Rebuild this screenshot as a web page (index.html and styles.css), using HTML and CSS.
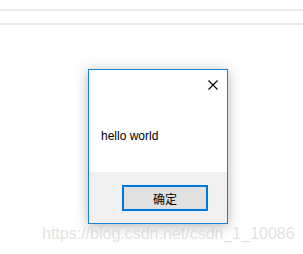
FILE: index.html
```html
<!DOCTYPE html>
<html lang="zh">
<head>
  <meta charset="UTF-8">
  <meta name="viewport" content="width=device-width, initial-scale=1.0">
  <title>alert</title>
  <link rel="stylesheet" href="styles.css">
</head>
<body>

  <!-- page behind the dialog -->
  <div class="page">
    <div class="rule rule-first"></div>
    <div class="rule"></div>
  </div>

  <!-- message box -->
  <div class="dialog">
    <div class="dialog-body">
      <button class="close-btn" aria-label="close">
        <svg width="10" height="10" viewBox="0 0 10 10">
          <path d="M0.5 0.5 L9.5 9.5 M9.5 0.5 L0.5 9.5" stroke="#000" stroke-width="1.1" fill="none"/>
        </svg>
      </button>
      <p class="message">hello world</p>
    </div>
    <div class="dialog-footer">
      <button class="ok-btn">确定</button>
    </div>
  </div>

  <!-- watermark -->
  <div class="watermark">https://blog.csdn.net/csdn_1_10086</div>

</body>
</html>
```

FILE: styles.css
```css
/* Base */
body {
  margin: 0;
  padding: 0;
  background-color: #ffffff;
  font-family: 'Liberation Sans', Arial, sans-serif;
  width: 303px;
  height: 254px;
  overflow: hidden;
  position: relative;
}

.page {
  padding-top: 9px;
}

.rule {
  height: 2px;
  background-color: #ebebeb;
}

.rule-first {
  margin-bottom: 12px;
}

/* Dialog */
.dialog {
  position: absolute;
  left: 88px;
  top: 69px;
  width: 140px;
  height: 155px;
  box-sizing: border-box;
  border: 1px solid #1883d7;
  background-color: #ffffff;
  box-shadow: 0 2px 12px rgba(0, 0, 0, 0.3);
  display: flex;
  flex-direction: column;
}

.dialog-body {
  height: 102px;
  position: relative;
  display: flex;
  align-items: center;
  padding-left: 12px;
}

.message {
  margin: 0;
  padding-top: 29px;
  font-size: 12px;
  color: #000000;
}

.close-btn {
  position: absolute;
  top: 10px;
  right: 9px;
  width: 10px;
  height: 10px;
  padding: 0;
  border: none;
  background: none;
  display: flex;
}

.dialog-footer {
  flex: 1;
  background-color: #f0f0f0;
  display: flex;
  justify-content: flex-end;
  align-items: flex-start;
  padding: 13px 19px 0 0;
}

.ok-btn {
  width: 86px;
  height: 26px;
  box-sizing: border-box;
  border: 2px solid #0078d7;
  background-color: #e1e1e1;
  font-family: 'Liberation Sans', 'Noto Sans CJK SC', sans-serif;
  font-size: 12px;
  color: #000000;
  padding: 0;
}

/* Watermark */
.watermark {
  position: absolute;
  left: 42px;
  top: 225px;
  font-size: 16px;
  color: rgba(190, 190, 190, 0.45);
  white-space: nowrap;
}
```
